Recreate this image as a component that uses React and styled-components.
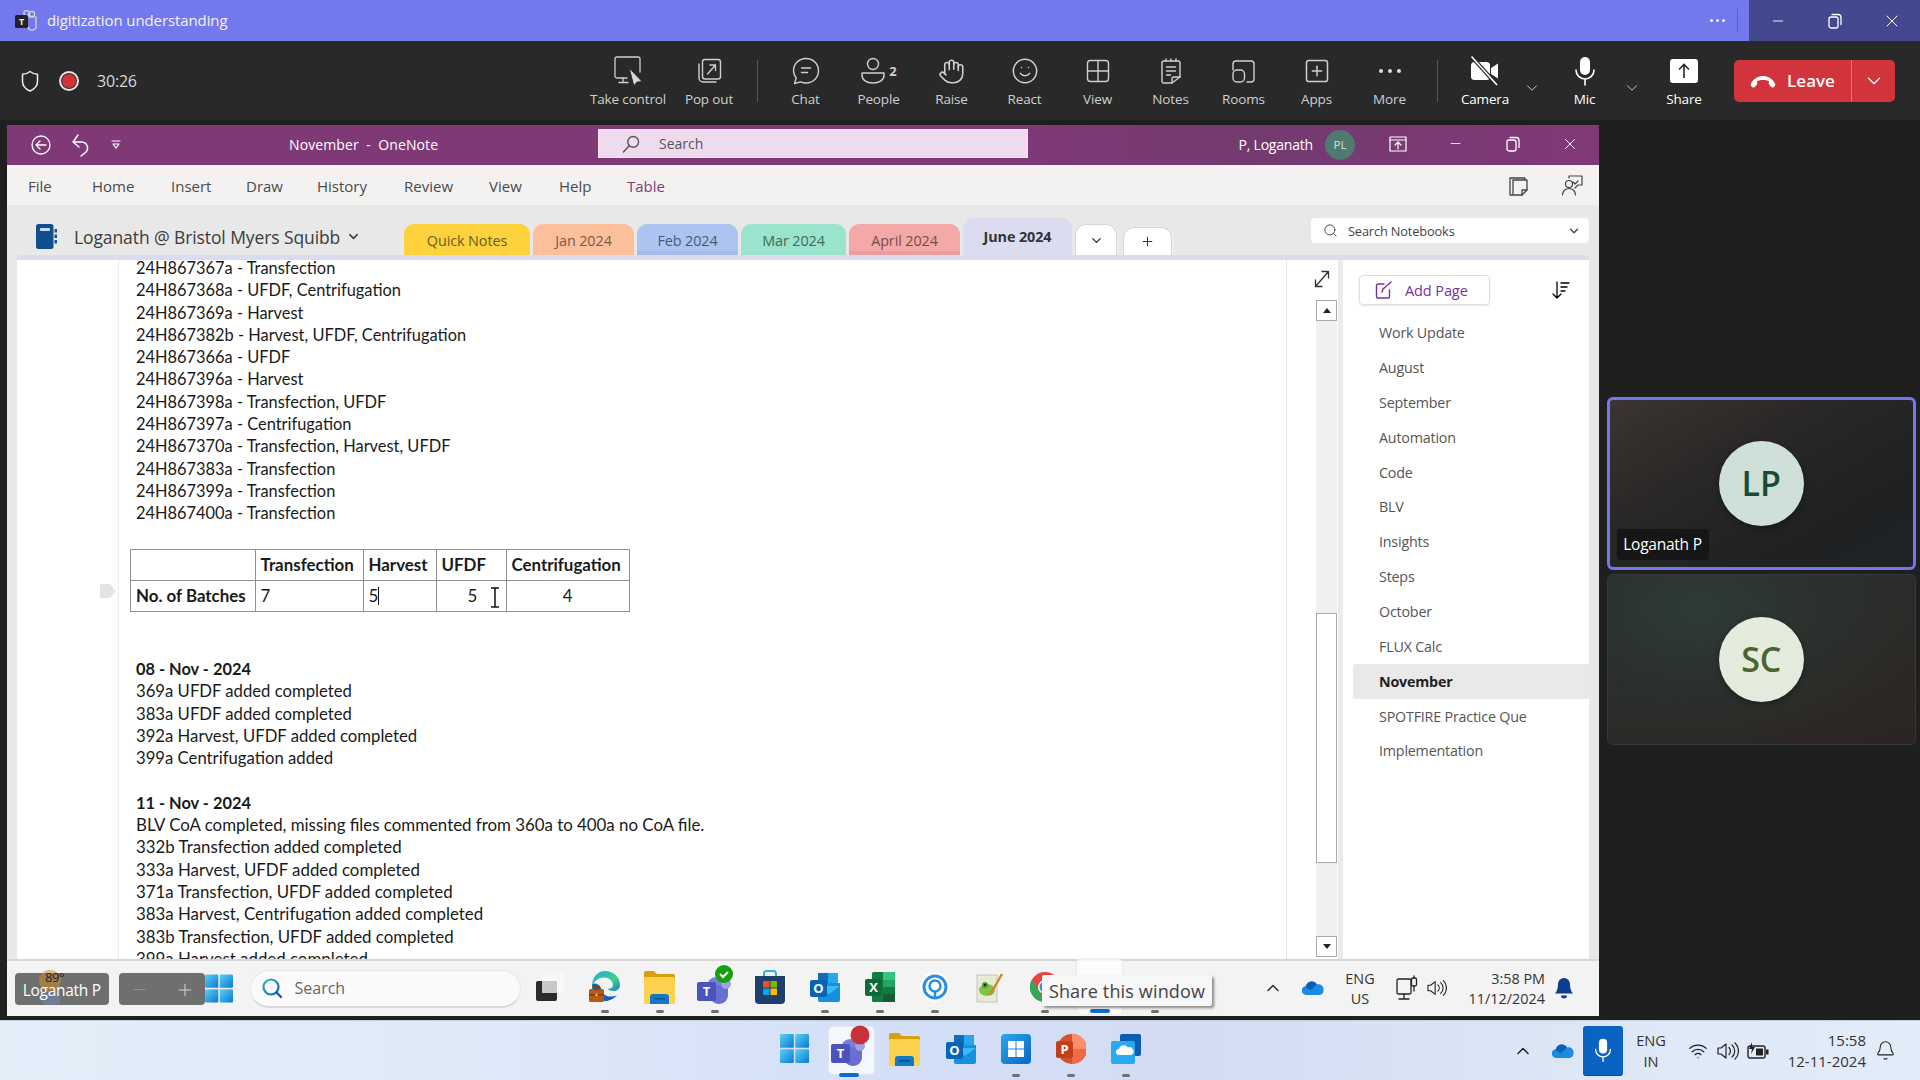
import React from "react";
import styled, { createGlobalStyle } from "styled-components";
import { Hand, Smile, SquarePlus, Search as SearchGlyph, ChevronDown, ChevronUp, X, Minus, Plus, Wifi, Bell } from "lucide-react";

const Global = createGlobalStyle`
  html, body { margin: 0; padding: 0; background: #1f1f1f; }
  * { box-sizing: border-box; }
  body { font-family: "Open Sans", "Noto Sans", sans-serif; }
`;

const Screen = styled.div`
  width: 1920px; height: 1080px; display: flex; flex-direction: column; overflow: hidden; background: #1f1f1f;
`;

/* Teams title */
const TeamsTitle = styled.div`
  height: 41px; flex: none; display: flex; align-items: center; background: #7378ec; color: #fff; padding-left: 15px;
`;
const TeamsName = styled.span`
  margin: -1px 0 0 10px; font-size: 15px; color: #f4f4ff; letter-spacing: -.1px;
`;
const TitleDots = styled.span`
  margin-left: auto; display: flex; gap: 3px; padding-right: 12px; height: 24px; align-items: center; border-right: 1px solid #5b5fc0; margin-right: 11px;
  i { width: 3px; height: 3px; border-radius: 50%; background: #fff; }
`;
const WinButtons = styled.div`
  width: 171px; height: 100%; display: flex; background: #43488f; color: #fff;
`;
const WinButton = styled.div`
  flex: 1; display: flex; align-items: center; justify-content: center;
`;

/* Teams toolbar */
const Toolbar = styled.div`
  height: 79px; flex: none; display: flex; align-items: center; background: #292929; padding: 0 25px 0 20px; color: #eee;
`;
const Timer = styled.span`
  font-size: 16px; color: #d8d8d8; margin-left: 18px; letter-spacing: -.2px;
`;
const RecDot = styled.span`
  margin-left: 19px; width: 20px; height: 20px; border-radius: 50%; border: 2.5px solid #e6e6e6; background: #d13438; box-shadow: inset 0 0 0 1px #292929;
`;
const Tools = styled.div`
  margin-left: auto; display: flex; align-items: center; height: 100%;
`;
const Tool = styled.div`
  width: ${p => p.$w || 73}px; flex: none; display: flex; flex-direction: column; align-items: center; color: ${p => p.$on ? "#fff" : "#cfcfcf"};
`;
const ToolIcon = styled.div`
  height: 36px; display: flex; align-items: center; justify-content: center; gap: 3px; font-size: 13px; font-weight: 700;
`;
const ToolLabel = styled.span`
  font-size: 13.5px; line-height: 18px; margin-top: 1px; white-space: nowrap; letter-spacing: -.15px;
`;
const Divider = styled.span`
  width: 1px; height: 42px; background: #575757; margin: 0 11.25px; flex: none;
`;
const ToolChev = styled.div`
  width: ${p => p.$w}px; margin-right: ${p => p.$mr || 0}px; flex: none; display: flex; justify-content: center; color: #d8d8d8; padding-top: 15px;
`;
const Leave = styled.div`
  width: 161px; height: 42px; margin-left: 14.5px; display: flex; border-radius: 5px; background: #d1343b; color: #fff; flex: none;
`;
const LeaveMain = styled.div`
  flex: 1; display: flex; align-items: center; justify-content: center; gap: 11px; font-size: 17px; font-weight: 600; border-right: 1px solid #e07a7e;
`;
const LeaveChev = styled.div`
  width: 43px; display: flex; align-items: center; justify-content: center;
`;

/* body */
const Body = styled.div`
  flex: 1; min-height: 0; display: flex; padding: 5px 0 4px 7px; background: #1f1f1f;
`;
const Shared = styled.div`
  width: 1592px; flex: none; display: flex; flex-direction: column; background: #e8e8e8;
`;
const OneTitle = styled.div`
  height: 41px; flex: none; display: flex; align-items: center; color: #fff; padding-bottom: 1px; border-bottom: 1px solid #f3f2f1;
  background: linear-gradient(90deg, #803977 0%, #803977 62%, #733a70 78%, #803977 100%);
`;
const QuickIcons = styled.div`
  width: 198px; flex: none; display: flex; align-items: center; gap: 20px; padding-left: 24px;
`;
const DocName = styled.div`
  width: 393px; flex: none; font-size: 14px; letter-spacing: .1px; white-space: pre; padding-left: 84px;
`;
const OneSearch = styled.div`
  width: 430px; height: 29px; margin-bottom: 2px; flex: none; display: flex; align-items: center; gap: 19px; padding-left: 24px; background: #f0dbee; color: #555; font-size: 14px; box-shadow: 0 0 0 1px #f5e9f3 inset;
`;
const OneUser = styled.div`
  margin-left: auto; font-size: 14px; letter-spacing: -.2px; white-space: nowrap;
`;
const OneAvatar = styled.div`
  margin-left: 12px; width: 30px; height: 30px; flex: none; border-radius: 50%; background: #4f7a6f; color: #cfe0d8; display: flex; align-items: center; justify-content: center; font-size: 11.5px;
`;
const OneControls = styled.div`
  display: flex; align-items: center; margin-left: 14px; padding-bottom: 2px; flex: none;
  > div { width: 57.5px; display: flex; justify-content: center; }
`;
const Ribbon = styled.div`
  height: 39px; flex: none; display: flex; align-items: center; background: #f3f2f1; font-size: 15px; padding-left: 21px; box-shadow: 0 2px 4px rgba(0,0,0,.13); position: relative;
`;
const RibbonItem = styled.span`
  width: ${p => p.$w}px; flex: none; color: ${p => p.$on ? "#7a3d78" : "#4a4a4a"};
`;
const RibbonEnd = styled.div`
  margin-left: auto; display: flex; gap: 32px; padding-right: 16px; color: #444; align-items: center;
`;
const TabRow = styled.div`
  height: 50px; flex: none; display: flex; align-items: flex-end; background: #e8e8e8; position: relative;
`;
const NotebookBox = styled.div`
  width: 397px; flex: none; align-self: flex-start; height: 37px; margin-top: 13px; display: flex; align-items: center; padding-left: 29px; font-size: 17.5px; color: #3c3c3c; letter-spacing: -.1px; white-space: nowrap;
  > span { margin: 0 6px 0 17px; }
`;
const Tabs = styled.div`
  display: flex; align-items: flex-end; gap: 3px;
`;
const Tab = styled.div`
  width: ${p => p.$w}px; height: ${p => p.$h || 31}px; flex: none; border-radius: 10px 10px 0 0; background: ${p => p.$bg}; color: ${p => p.$fg || "#555"}; font-size: 14.4px; font-weight: ${p => p.$on ? 700 : 400}; display: flex; align-items: center; justify-content: center; padding-top: ${p => p.$on ? 0 : 2}px; letter-spacing: -.1px; box-shadow: inset 0 -4px 0 ${p => p.$edge || "transparent"};
`;
const TabTool = styled.div`
  width: ${p => p.$w}px; height: ${p => p.$h}px; margin-left: ${p => p.$ml || 0}px; flex: none; background: #fff; border: 1px solid #d8d8d8; border-bottom: 0; border-radius: 11px 11px 0 0; color: #333; display: flex; align-items: center; justify-content: center; box-shadow: 3px 0 0 -1px #eee;
`;
const NotebookSearch = styled.div`
  margin-left: auto; margin-right: 10px; margin-bottom: 12px; width: 278px; height: 25px; background: #fff; border-radius: 4px; display: flex; align-items: center; font-size: 12.8px; color: #444; padding: 0 8px 0 12px; gap: 10px;
  span { flex: 1; letter-spacing: -.15px; }
`;
const Lavender = styled.div`
  height: 5px; flex: none; margin: 0 10px; background: #dcdcf0; border-radius: 4px 4px 0 0;
`;
const Main = styled.div`
  flex: 1; min-height: 0; display: flex; margin: 0 10px; background: #fff;
`;
const Note = styled.div`
  width: 1270px; flex: none; height: 100%; overflow: hidden; position: relative; border-right: 1px solid #e4e4e4; padding-left: 119px;
  font-family: Lato, "Open Sans", sans-serif; font-size: 16.4px; line-height: 22.3px; color: #1a1a1a;
  &::before { content: ""; position: absolute; left: 101px; top: 0; bottom: 0; width: 1px; background: #ececec; }
`;
const NoteInner = styled.div`
  margin-top: -3px;
`;
const Line = styled.div`
  white-space: pre; font-weight: ${p => p.$b ? 700 : 400}; ${p => p.$b ? "font-size: 16.4px;" : ""}
`;
const Block = styled.div`
  margin-top: ${p => p.$mt || 0}px; font-size: ${p => p.$fs || 16.4}px;
`;
const Table = styled.table`
  margin: 24.4px 0 46px -6px; width: 499px; height: 62px; table-layout: fixed; border-collapse: collapse; position: relative; font-size: 16.9px;
  td { border: 1px solid #8f8f8f; padding: 0 5px; height: 31px; line-height: 20px; }
`;
const Cell = styled.td`
  font-weight: ${p => p.$b ? 700 : 400}; text-align: ${p => p.$a || "left"}; ${p => p.$pl ? `padding-left:${p.$pl}px !important;` : ""}
`;
const Caret = styled.span`
  display: inline-block; width: 1px; height: 18px; background: #111; vertical-align: -3px;
`;
const Handle = styled.svg`
  position: absolute; left: 83px; top: 324px;
`;
const IBeam = styled.svg`
  position: absolute; left: 472px; top: 327px;
`;
const ScrollCol = styled.div`
  width: 56px; flex: none; display: flex; flex-direction: column; align-items: flex-end; border-right: 5px solid #ebebeb; padding: 9px 1px 2px 0;
`;
const ExpandBtn = styled.div`
  height: 31px; flex: none; color: #333; align-self: flex-start; margin-left: 27px; padding-top: 1px;
`;
const Track = styled.div`
  width: 21px; flex: 1; display: flex; flex-direction: column; background: #f0f0f0;
`;
const ScrollBtn = styled.div`
  height: 21px; flex: none; background: #fff; border: 1px solid #aaa; display: flex; align-items: center; justify-content: center;
  i { width: 0; height: 0; border-left: 4px solid transparent; border-right: 4px solid transparent; ${p => p.$down ? "border-top: 5px solid #222;" : "border-bottom: 5px solid #222;"} }
`;
const TrackGap = styled.div`
  flex: ${p => p.$f};
`;
const Thumb = styled.div`
  height: 250px; flex: none; background: #fff; border: 1px solid #aaa;
`;
const PagePane = styled.div`
  flex: 1; min-width: 0; padding-top: 15px;
`;
const PageHead = styled.div`
  display: flex; align-items: center; justify-content: space-between; padding: 0 19px 0 16px; height: 30px;
`;
const AddPage = styled.div`
  width: 131px; height: 30px; border: 1px solid #dedede; border-radius: 4px; display: flex; align-items: center; gap: 12px; padding-left: 15px; color: #7a2fa0; font-size: 14.5px; box-shadow: 0 1px 2px rgba(0,0,0,.1); letter-spacing: -.1px;
`;
const PageList = styled.div`
  margin-top: 10.3px; padding-left: 10px;
`;
const PageRow = styled.div`
  height: 34.85px; display: flex; align-items: center; padding-left: 26px; font-size: 14.3px; letter-spacing: -.2px; color: ${p => p.$on ? "#222" : "#555"}; font-weight: ${p => p.$on ? 700 : 400}; background: ${p => p.$on ? "#e9e9e9" : "transparent"}; border-radius: 3px 0 0 3px;
`;

/* shared taskbar */
const InnerBar = styled.div`
  height: 57px; flex: none; display: flex; align-items: center; background: #f3f3f3; border-top: 2px solid #d6d6d6; padding-left: 8px; position: relative;
`;
const Chip = styled.div`
  height: 32px; width: ${p => p.$w}px; margin-left: ${p => p.$ml || 0}px; flex: none; display: flex; align-items: center; justify-content: center; background: #6f6f6f; border-radius: 4px; color: #fff; font-size: 15.5px; letter-spacing: -.3px; position: relative; padding-top: 2px; gap: 26px; white-space: nowrap;
`;
const ChipText = styled.span`
  position: relative;
`;
const ChipArt = styled.svg`
  position: absolute; left: 20px; top: -4px;
`;
const Weather = styled.span`
  position: absolute; left: 30px; top: -5px; color: #222; font-size: 13px; letter-spacing: -.4px;
`;
const SearchPill = styled.div`
  width: 271px; height: 38px; margin: 0 1.5px 0 16.5px; flex: none; border-radius: 19px; background: #fafafa; border: 1px solid #e6e6e6; border-bottom: 2px solid #d8d8d8; display: flex; align-items: center; gap: 12px; padding-left: 10px; color: #666; font-size: 16px;
`;
const Slot = styled.div`
  width: ${p => p.$w || 55}px; height: 100%; flex: none; display: flex; align-items: center; justify-content: center; position: relative; padding-bottom: ${p => p.$pb ?? 3}px;
  ${p => p.$dot ? `&::after { content:""; position:absolute; left:50%; bottom:${p.$db ?? 3}px; width:8px; height:3px; margin-left:-4px; border-radius:2px; background:#707070; }` : ""}
  ${p => p.$active ? `&::after { content:""; position:absolute; left:50%; bottom:${p.$db ?? 3}px; width:20px; height:4px; margin-left:-10px; border-radius:2px; background:#0a6fd0; }` : ""}
`;
const ActiveSlot = styled(Slot)`
  &::before { content:""; position:absolute; left:${p => p.$hl ?? 4}px; right:${p => p.$hr ?? 4}px; top:${p => p.$ht ?? 1}px; bottom:${p => p.$hb ?? 1}px; border-radius:5px; background:#ffffff; border:1px solid #e8e8e8; opacity:.75; }
  svg { position: relative; }
`;
const Tip = styled.div`
  position: absolute; left: 1035px; top: 14px; width: 170px; height: 31px; background: #f7f7f7; color: #444; font-size: 18px; display: flex; align-items: center; justify-content: center; box-shadow: 2px 2px 3px rgba(0,0,0,.45); border-radius: 2px; letter-spacing: .15px; white-space: nowrap;
`;
const Tray = styled.div`
  margin-left: auto; display: flex; height: 100%; align-items: center; padding-right: 16px; color: #222;
`;
const TwoLines = styled.div`
  width: ${p => p.$w}px; flex: none; text-align: ${p => p.$a || "center"}; font-size: ${p => p.$fs || 14.4}px; line-height: ${p => p.$lh || 20}px; color: #333; white-space: nowrap;
`;
const OuterBar = styled.div`
  height: 60px; flex: none; display: flex; align-items: center; padding-left: 766.5px;
  background: linear-gradient(90deg, #e4eef9 0%, #dfe9f8 25%, #d4e0f8 45%, #d3dcf3 62%, #dbe5f5 78%, #e3edf9 100%);
  border-top: 1px solid #c5cdda;
`;
const MicTile = styled.div`
  width: 39.5px; height: 50px; flex: none; background: #0a63c0; border-radius: 3px; display: flex; align-items: center; justify-content: center; border-bottom: 1px solid #084c94;
`;

/* stage */
const Stage = styled.div`
  flex: 1; display: flex; flex-direction: column; justify-content: center; gap: 4px; padding: 0 4px 0 7.5px;
`;
const TileBox = styled.div`
  height: ${p => p.$h}px; flex: none; border-radius: 6px; display: flex; align-items: center; justify-content: center; position: relative;
  border: ${p => p.$active ? "3.5px solid #7378ec" : "1px solid #333a38"};
  background: ${p => p.$active
    ? "linear-gradient(150deg, #3b3432 0%, #2a2827 35%, #1f2123 70%, #1f2325 100%)"
    : "radial-gradient(ellipse at 30% 20%, #2d3b37 0%, #2b2f2c 45%, transparent 75%), linear-gradient(160deg, #2b3230 0%, #2c2a28 55%, #2b2422 100%)"};
`;
const Avatar = styled.div`
  width: 85px; height: 85px; border-radius: 50%; background: ${p => p.$bg}; color: ${p => p.$fg}; display: flex; align-items: center; justify-content: center; font-size: 34px; font-weight: 600; box-shadow: 0 2px 6px rgba(0,0,0,.35);
`;
const NameTag = styled.div`
  position: absolute; left: 7px; bottom: 7px; width: 92px; height: 31px; background: #161616; border-radius: 4px; color: #fff; font-size: 15.5px; display: flex; align-items: center; justify-content: center; letter-spacing: -.25px; white-space: nowrap;
`;

/* ---------- drawings ---------- */
const S = ({ w = 24, h, vb, children, stroke = "currentColor", sw = 1.5, fill = "none" }) => (
  <svg width={w} height={h || w} viewBox={vb || `0 0 ${w} ${h || w}`} fill={fill} stroke={stroke} strokeWidth={sw} strokeLinecap="round" strokeLinejoin="round">{children}</svg>
);
const TeamsSmall = () => (
  <svg width="22" height="21" viewBox="0 0 22 21"><circle cx="17" cy="4" r="2.6" fill="none" stroke="#ddd" strokeWidth="1.2"/><circle cx="11.5" cy="3" r="2.6" fill="none" stroke="#ddd" strokeWidth="1.2"/><path d="M9 7h12v8a4 4 0 0 1-8 2" fill="none" stroke="#ddd" strokeWidth="1.2"/><rect x="0" y="5" width="13" height="13" rx="1.5" fill="#222"/><text x="6.5" y="15" fontSize="9" fontWeight="700" fill="#eee" textAnchor="middle" fontFamily="Open Sans">T</text></svg>
);
const Shield = () => <S w={20} h={24}><path d="M10 2.5c2.4 2 5 2.8 7.5 2.8v7.2c0 4.4-3 7.5-7.5 9.500-4.500-2-7.500-5.100-7.500-9.500V5.300C5 5.300 7.600 4.500 10 2.500z"/></S>;
const TakeControl = () => (
  <S w={30} h={30} sw={1.3}>
    <path d="M14 22H4a2 2 0 0 1-2-2V3a2 2 0 0 1 2-2h21a2 2 0 0 1 2 2v13"/>
    <path d="M10 22v4M6 26.500h9"/>
    <path d="M16.500 12.500L29 25.500l-5 .5-3 3.500z" fill="#d8d8d8" stroke="#292929" strokeWidth=".8"/>
  </S>
);
const PopOut = () => <S w={26} h={28} sw={1.4}><path d="M3 7v14a4 4 0 0 0 4 4h13"/><rect x="6.500" y="2.500" width="18" height="19.500" rx="2.500"/><path d="M11.500 17l8-9M14 8h5.500v5.500"/></S>;
const Chat = () => <S w={28} h={28} sw={1.4}><path d="M14 1.500c6.900 0 12.500 5.400 12.500 12.300S20.900 26 14 26c-2 0-3.800-.4-5.500-1.200L2.500 26.500l1.700-5.500C2.600 19 1.500 16.500 1.500 13.800 1.500 6.900 7.100 1.500 14 1.500z"/><path d="M9.500 11h9M9.500 15.500h6"/></S>;
const People = () => <S w={26} h={28} sw={1.4}><circle cx="13" cy="7" r="5.500"/><path d="M2 16h22v2c0 5-4.500 8-11 8S2 23 2 18z"/></S>;
const ViewIcon = () => <S w={26} h={26} sw={1.4}><rect x="2.500" y="2.500" width="21" height="21" rx="3"/><path d="M13 2.500v21M2.500 13h21"/></S>;
const NotesIcon = () => <S w={24} h={28} sw={1.4}><path d="M13 26H5a2 2 0 0 1-2-2V6a2 2 0 0 1 2-2h14a2 2 0 0 1 2 2v14z"/><path d="M7 2v2M12 2v2M17 2v2M7.500 10h9M7.500 14h9M7.500 18h4M13 26v-4a2 2 0 0 1 2-2h6"/></S>;
const Rooms = () => <S w={25} h={25} sw={1.4}><path d="M2 11V5a3 3 0 0 1 3-3h15a3 3 0 0 1 3 3v15a3 3 0 0 1-3 3h-4"/><rect x="2" y="11" width="11.500" height="12" rx="4"/></S>;
const CameraOff = () => (
  <svg width="30" height="32" viewBox="0 0 30 32"><rect x="1" y="7" width="19" height="18" rx="3.500" fill="#fff"/><path d="M21 13l7-4.500v15L21 19z" fill="#fff"/><path d="M1.500 1.500L27 30" stroke="#292929" strokeWidth="4"/><path d="M1.500 1.500L27 30" stroke="#fff" strokeWidth="1.600"/></svg>
);
const MicIcon = ({ c = "#fff", s = 1 }) => (
  <svg width={22 * s} height={30 * s} viewBox="0 0 22 30"><rect x="6" y="1" width="10" height="18" rx="5" fill={c}/><path d="M2 14a9 9 0 0 0 18 0M11 23v6" fill="none" stroke={c} strokeWidth="1.600" strokeLinecap="round"/></svg>
);
const ShareIcon = () => (
  <svg width="28" height="24" viewBox="0 0 28 24"><rect x="0" y="0" width="28" height="24" rx="3" fill="#fff"/><path d="M14 19V6M9 10.500L14 5.500l5 5" stroke="#292929" strokeWidth="1.600" fill="none"/></svg>
);
const Hangup = () => (
  <svg width="26" height="14" viewBox="0 0 26 14"><path d="M1 9.500C4 4 8.500 2 13 2s9 2 12 7.500c.5 1 .3 2-.4 2.700l-.8.8c-.7.700-1.800.700-2.500 0l-2-2.200c-.5-.6-.7-1.500-.5-2.300l.3-1.200C17.500 6.500 15.500 6 13 6s-4.500.5-6.100 1.300l.3 1.200c.2.800 0 1.700-.5 2.300l-2 2.200c-.7.700-1.800.700-2.500 0l-.8-.8C.7 11.500.5 10.500 1 9.500z" fill="#fff"/></svg>
);
const Restore = () => <S w={14} h={16} sw={1.300}><rect x="1" y="4" width="9" height="11" rx="2"/><path d="M4 1.500h6a3 3 0 0 1 3 3v7"/></S>;
const BackCircle = () => <S w={20} h={24} sw={1.300}><circle cx="10" cy="12" r="9"/><path d="M15 12H5.500M9 8l-4 4 4 4"/></S>;
const Undo = () => <S w={20} h={24} sw={1.400}><path d="M2 9h9a6 6 0 0 1 4 10l-5 4M2 9l5-7M2 9l6 5"/></S>;
const QuickDown = () => <S w={10} h={12} sw={1.200}><path d="M1 2h8M2 5h6L5 9z"/></S>;
const Glass = ({ w = 18 }) => <S w={w} h={w} sw={1.400}><circle cx={w * .62} cy={w * .38} r={w * .3}/><path d={`M${w * .4} ${w * .6}L${w * .08} ${w * .94}`}/></S>;
const RibbonPop = () => <S w={20} h={20} sw={1.300}><path d="M1 2h15v1M1 2v17h12l5-5V4H4v15"/><path d="M13 19v-5h5"/></S>;
const Feedback = () => <S w={22} h={22} sw={1.200}><circle cx="8" cy="9" r="3.500"/><path d="M1.500 20c0-4 3-6.500 6.500-6.500s6.500 2.500 6.500 6.500"/><path d="M8 3V1h13v9h-4l-3 3M12 7l2 2 3-3"/></S>;
const NotebookIcon = () => (
  <svg width="21" height="25" viewBox="0 0 21 25"><rect x="0" y="0" width="17.500" height="25" rx="2.500" fill="#0f4f8c"/><rect x="4" y="4" width="10" height="3" rx="1" fill="#c9dcee"/><rect x="18.500" y="5" width="2.500" height="3.500" fill="#14508c"/><rect x="18.500" y="10.500" width="2.500" height="3.500" fill="#14508c"/><rect x="18.500" y="16" width="2.500" height="3.500" fill="#14508c"/></svg>
);
const AddPageIcon = () => <S w={18} h={18} sw={1.400}><path d="M9 3H3a1.500 1.500 0 0 0-1.500 1.500v11A1.500 1.500 0 0 0 3 17h10a1.500 1.500 0 0 0 1.500-1.500V9"/><path d="M7 11l1-3 8-7"/></S>;
const SortIcon = () => <S w={18} h={20} sw={1.300}><path d="M5 2v16M1 14l4 4 4-4M9 3h8M9 7h6M9 11h4"/></S>;
const ExpandIcon = () => <S w={16} h={18} sw={1.300}><path d="M1.500 16.500L14.500 1.500M8 1.500h6.500V8M1.500 10v6.500H8"/></S>;

const WinLogo = ({ s = 28, h }) => (
  <svg width={s} height={h || s} viewBox="0 0 28 28"><defs><linearGradient id="wl" x1="0" y1="0" x2="1" y2="1"><stop offset="0" stopColor="#5bd2f5"/><stop offset="1" stopColor="#0a78d4"/></linearGradient></defs><rect x="0" y="0" width="13.300" height="13.300" rx="1" fill="url(#wl)"/><rect x="14.700" y="0" width="13.300" height="13.300" rx="1" fill="url(#wl)"/><rect x="0" y="14.700" width="13.300" height="13.300" rx="1" fill="url(#wl)"/><rect x="14.700" y="14.700" width="13.300" height="13.300" rx="1" fill="url(#wl)"/></svg>
);
const SearchColor = () => (
  <svg width="22" height="22" viewBox="0 0 22 22"><defs><linearGradient id="sc" x1="0" y1="0" x2="1" y2="1"><stop offset="0" stopColor="#35b8a8"/><stop offset="1" stopColor="#0a5fc0"/></linearGradient></defs><circle cx="10" cy="10" r="7.500" fill="none" stroke="url(#sc)" strokeWidth="2.200"/><path d="M15.500 15.500L20 20" stroke="#0a5fc0" strokeWidth="2.400" strokeLinecap="round"/></svg>
);
const TaskView = () => (
  <svg width="28" height="30" viewBox="0 0 28 30"><rect x="6" y="1" width="22" height="20" rx="2" fill="#f8f8f8"/><rect x="0" y="9" width="21" height="20" rx="2" fill="#2a2a2a"/><rect x="6" y="9" width="15" height="12" fill="#c8c8c8"/></svg>
);
const Edge = () => (
  <svg width="32" height="34" viewBox="0 0 32 34"><defs><linearGradient id="eg" x1="0" y1="0" x2="1" y2="1"><stop offset="0" stopColor="#1fa6e0"/><stop offset=".6" stopColor="#3fd28a"/><stop offset="1" stopColor="#1a78c8"/></linearGradient></defs><path d="M16 1c9 0 15 6.500 15 14 0 4-3.500 6-7 6-3 0-5-1-5-2.500 3 .5 5-1 5-3.500 0-4-4-7.500-9-7.500-6 0-10 4-12 9C3 8 8 1 16 1z" fill="url(#eg)"/><path d="M3 16c0 9 6 15 13 15 5 0 9-2.500 12-6-4 2-9 2-12 0-3-2-4-5-4-7-2-5-9-6-9-2z" fill="#1260b8"/><rect x="0" y="19" width="15" height="13" rx="1.500" fill="#b85a10"/><rect x="5" y="16.500" width="5" height="3" fill="none" stroke="#8a4208" strokeWidth="1.200"/><rect x="0" y="24" width="15" height="1.500" fill="#7a3a08"/><rect x="6.500" y="23.500" width="2" height="2.500" fill="#f3c14a"/></svg>
);
const Folder = () => (
  <svg width="31" height="34" viewBox="0 0 31 34"><path d="M0 3a2 2 0 0 1 2-2h8l3 3h16a2 2 0 0 1 2 2v4H0z" fill="#d9a00c"/><rect x="0" y="7" width="31" height="27" rx="1.500" fill="#fdd24f"/><path d="M6 34v-7a3 3 0 0 1 3-3h13a3 3 0 0 1 3 3v7z" fill="#1278c8"/><rect x="10" y="28" width="11" height="1.500" fill="#0b4f8f"/></svg>
);
const TeamsColor = ({ badge }) => (
  <svg width="38" height="38" viewBox="0 0 38 38" overflow="visible"><circle cx="20" cy="18" r="9" fill="#7a80d8"/><path d="M12 17h20v10c0 5-4 9-9 9s-9-4-9-8z" fill="#6a6fcf"/><circle cx="30" cy="16" r="5" fill="#9ea2e6"/><rect x="1" y="14" width="19" height="19" rx="2" fill="#4b53bc"/><text x="10.500" y="28" fontSize="13" fontWeight="700" textAnchor="middle" fill="#fff" fontFamily="Open Sans">T</text>{badge}</svg>
);
const Store = () => (
  <svg width="30" height="34" viewBox="0 0 30 34"><path d="M9 6V3.500A2.500 2.500 0 0 1 11.500 1h7A2.500 2.500 0 0 1 21 3.500V6" fill="none" stroke="#35b0e0" strokeWidth="2"/><path d="M0 6h30v24a4 4 0 0 1-4 4H4a4 4 0 0 1-4-4z" fill="#1e3f6c"/><rect x="8" y="11" width="6.500" height="6.500" fill="#f25022"/><rect x="15.500" y="11" width="6.500" height="6.500" fill="#7fba00"/><rect x="8" y="18.500" width="6.500" height="6.500" fill="#00a4ef"/><rect x="15.500" y="18.500" width="6.500" height="6.500" fill="#ffb900"/></svg>
);
const Outlook = () => (
  <svg width="30" height="30" viewBox="0 0 30 30"><rect x="8" y="1" width="20" height="10" fill="#0a5aa8"/><rect x="8" y="1" width="10" height="10" fill="#0f6cbd"/><rect x="18" y="1" width="10" height="10" fill="#28a8ea"/><path d="M8 11h22v17a2 2 0 0 1-2 2H10a2 2 0 0 1-2-2z" fill="#1490df"/><path d="M8 14l11 8 11-8" fill="#50d9ff" opacity=".6"/><rect x="0" y="8" width="17" height="17" rx="2" fill="#0a64b4"/><text x="8.500" y="21" fontSize="13" fontWeight="700" textAnchor="middle" fill="#fff" fontFamily="Open Sans">O</text></svg>
);
const Excel = () => (
  <svg width="30" height="30" viewBox="0 0 30 30"><rect x="7" y="0" width="23" height="30" rx="1.500" fill="#107c41"/><rect x="18" y="0" width="12" height="8" fill="#33c481"/><rect x="18" y="8" width="12" height="7" fill="#21a366"/><rect x="18" y="15" width="12" height="7" fill="#107c41"/><rect x="18" y="22" width="12" height="8" fill="#185c37"/><rect x="0" y="7" width="17" height="17" rx="2" fill="#0e6b38"/><text x="8.500" y="20" fontSize="13" fontWeight="700" textAnchor="middle" fill="#fff" fontFamily="Open Sans">X</text></svg>
);
const Target = () => (
  <svg width="30" height="30" viewBox="0 0 30 30"><circle cx="15" cy="15" r="15" fill="#fff"/><circle cx="15" cy="15" r="11" fill="none" stroke="#2a8fe0" strokeWidth="3"/><circle cx="15" cy="14" r="5.500" fill="none" stroke="#2a8fe0" strokeWidth="2.500"/><path d="M15 19v6" stroke="#2a8fe0" strokeWidth="2.500"/></svg>
);
const Npp = () => (
  <svg width="28" height="32" viewBox="0 0 28 32"><rect x="1" y="4" width="20" height="27" fill="#e8ead8" stroke="#bbb" strokeWidth=".8"/><ellipse cx="11" cy="19" rx="8" ry="6" fill="#7fc24a"/><circle cx="9" cy="14" r="3" fill="#5a9a30"/><circle cx="9" cy="14" r="1.200" fill="#222"/><path d="M14 24L26 3" stroke="#d08a2a" strokeWidth="2.500"/></svg>
);
const Chrome = () => (
  <svg width="30" height="30" viewBox="0 0 30 30"><circle cx="15" cy="15" r="15" fill="#e8453c"/><path d="M15 30A15 15 0 0 1 2 7.500L9 19z" fill="#34a853"/><path d="M15 30a15 15 0 0 0 13-22.500H15l6 11z" fill="#fbbc05"/><circle cx="15" cy="15" r="7" fill="#fff"/><circle cx="15" cy="15" r="5.500" fill="#4285f4"/></svg>
);
const Cloud = () => (
  <svg width="22" height="14" viewBox="0 0 22 14"><path d="M4.500 14A4.500 4.500 0 0 1 4 5a6 6 0 0 1 11-1.500A5 5 0 0 1 21.500 9 5 5 0 0 1 17.500 14z" fill="#1b8ae0"/><path d="M4 5a6 6 0 0 1 11-1.500L9 9 4.500 7z" fill="#0a5fb4"/></svg>
);
const NetIcon = () => <S w={22} h={26} sw={1.300}><rect x="1" y="4" width="14" height="15" rx="1.500"/><path d="M8 19v4M3 24h10"/><rect x="15.500" y="3" width="5" height="8" rx="1.500" fill="#f3f3f3"/><path d="M18 1v2M18 11v5"/></S>;
const Speaker = () => <S w={22} h={20} sw={1.200}><path d="M1 7v6h3l5 4V3L4 7zM12 6.500a5 5 0 0 1 0 7M15 4a8 8 0 0 1 0 12M18 2a11 11 0 0 1 0 16"/></S>;
const BellFill = () => <svg width="18" height="22" viewBox="0 0 18 22"><path d="M9 1a6 6 0 0 1 6 6c0 6 2 8 3 9.500H0C1 15 3 13 3 7a6 6 0 0 1 6-6z" fill="#0b3d91"/><path d="M6 18.500h6a3 3 0 0 1-6 0z" fill="#0b3d91"/></svg>;
const Battery = () => (
  <svg width="22" height="20" viewBox="0 0 22 20"><rect x="1" y="5" width="17" height="12" rx="2" fill="none" stroke="#222" strokeWidth="1.400"/><rect x="9" y="7.500" width="7" height="7" fill="#222"/><rect x="19" y="8.500" width="2.500" height="5" fill="#222"/><path d="M5 1L2 8h3l-1 5 4-7H5z" fill="#222"/></svg>
);
const Powerpoint = () => (
  <svg width="30" height="32" viewBox="0 0 30 32"><circle cx="16" cy="16" r="15" fill="#d35230"/><path d="M16 1a15 15 0 0 1 15 15H16z" fill="#ff8f6b"/><path d="M16 16h15a15 15 0 0 1-15 15z" fill="#ed6c47"/><rect x="0" y="8" width="17" height="17" rx="2" fill="#c43e1c"/><text x="8.500" y="21" fontSize="13" fontWeight="700" textAnchor="middle" fill="#fff" fontFamily="Open Sans">P</text></svg>
);
const BlueTile = () => (
  <svg width="30" height="30" viewBox="0 0 30 30"><defs><linearGradient id="bt" x1="0" y1="0" x2="1" y2="1"><stop offset="0" stopColor="#2aa8f0"/><stop offset="1" stopColor="#0a66c2"/></linearGradient></defs><rect width="30" height="30" rx="4" fill="url(#bt)"/><rect x="7" y="7" width="7.500" height="7.500" fill="#fff"/><rect x="15.500" y="7" width="7.500" height="7.500" fill="#fff"/><rect x="7" y="15.500" width="7.500" height="7.500" fill="#fff"/><rect x="15.500" y="15.500" width="7.500" height="7.500" fill="#fff"/></svg>
);
const AzureCloud = () => (
  <svg width="30" height="30" viewBox="0 0 30 30"><rect x="9" y="0" width="21" height="22" rx="2" fill="#0a5fb4"/><rect x="0" y="7" width="24" height="23" rx="2" fill="#2aa8f0"/><path d="M8 21a3 3 0 0 1 0-6 5 5 0 0 1 9-1.500A4 4 0 0 1 20 21z" fill="#fff"/></svg>
);

const pages = ["Work Update", "August", "September", "Automation", "Code", "BLV", "Insights", "Steps", "October", "FLUX Calc", "November", "SPOTFIRE Practice Que", "Implementation"];
const batches = ["24H867367a - Transfection", "24H867368a - UFDF, Centrifugation", "24H867369a - Harvest", "24H867382b - Harvest, UFDF, Centrifugation", "24H867366a - UFDF", "24H867396a - Harvest", "24H867398a - Transfection, UFDF", "24H867397a - Centrifugation", "24H867370a - Transfection, Harvest, UFDF", "24H867383a - Transfection", "24H867399a - Transfection", "24H867400a - Transfection"];
const nov8 = ["369a UFDF added completed", "383a UFDF added completed", "392a Harvest, UFDF added completed", "399a Centrifugation added"];
const nov11 = ["BLV CoA completed, missing files commented from 360a to 400a no CoA file.", "332b Transfection added completed", "333a Harvest, UFDF added completed", "371a Transfection, UFDF added completed", "383a Harvest, Centrifugation added completed", "383b Transfection, UFDF added completed", "399a Harvest added completed"];
const tabs = [
  { t: "Quick Notes", w: 126, bg: "#fdd23c", fg: "#6a5a20" },
  { t: "Jan 2024", w: 101, bg: "#fcbf9c", fg: "#7a5a48" },
  { t: "Feb 2024", w: 101, bg: "#aec4f0", fg: "#4a5a78", edge: "#a4bbe8" },
  { t: "Mar 2024", w: 105, bg: "#9ae3cc", fg: "#3f6a5c" },
  { t: "April 2024", w: 111, bg: "#f4a8a8", fg: "#7a4a4a", edge: "#eb9e9e" },
];

export default function App() {
  return (
    <Screen>
      <Global />
      <TeamsTitle>
        <TeamsSmall />
        <TeamsName>digitization understanding</TeamsName>
        <TitleDots><i /><i /><i /></TitleDots>
        <WinButtons>
          <WinButton><Minus size={16} strokeWidth={1.4} /></WinButton>
          <WinButton><Restore /></WinButton>
          <WinButton><X size={20} strokeWidth={1.2} /></WinButton>
        </WinButtons>
      </TeamsTitle>
      <Toolbar>
        <Shield />
        <RecDot />
        <Timer>30:26</Timer>
        <Tools>
          <Tool $w={89}><ToolIcon><TakeControl /></ToolIcon><ToolLabel>Take control</ToolLabel></Tool>
          <Tool><ToolIcon><PopOut /></ToolIcon><ToolLabel>Pop out</ToolLabel></Tool>
          <Divider />
          <Tool><ToolIcon><Chat /></ToolIcon><ToolLabel>Chat</ToolLabel></Tool>
          <Tool><ToolIcon><People />2</ToolIcon><ToolLabel>People</ToolLabel></Tool>
          <Tool><ToolIcon><Hand size={27} strokeWidth={1.4} /></ToolIcon><ToolLabel>Raise</ToolLabel></Tool>
          <Tool><ToolIcon><Smile size={28} strokeWidth={1.3} /></ToolIcon><ToolLabel>React</ToolLabel></Tool>
          <Tool><ToolIcon><ViewIcon /></ToolIcon><ToolLabel>View</ToolLabel></Tool>
          <Tool><ToolIcon><NotesIcon /></ToolIcon><ToolLabel>Notes</ToolLabel></Tool>
          <Tool><ToolIcon><Rooms /></ToolIcon><ToolLabel>Rooms</ToolLabel></Tool>
          <Tool><ToolIcon><SquarePlus size={28} strokeWidth={1.3} /></ToolIcon><ToolLabel>Apps</ToolLabel></Tool>
          <Tool><ToolIcon><svg width="24" height="6" viewBox="0 0 24 6"><circle cx="3" cy="3" r="2" fill="#ddd"/><circle cx="12" cy="3" r="2" fill="#ddd"/><circle cx="21" cy="3" r="2" fill="#ddd"/></svg></ToolIcon><ToolLabel>More</ToolLabel></Tool>
          <Divider />
          <Tool $w={71} $on><ToolIcon><CameraOff /></ToolIcon><ToolLabel>Camera</ToolLabel></Tool>
          <ToolChev $w={23}><ChevronDown size={18} strokeWidth={1.2} /></ToolChev>
          <Tool $w={82} $on><ToolIcon><MicIcon /></ToolIcon><ToolLabel>Mic</ToolLabel></Tool>
          <ToolChev $w={12} $mr={11}><ChevronDown size={18} strokeWidth={1.2} style={{ flex: "none" }} /></ToolChev>
          <Tool $w={71} $on><ToolIcon><ShareIcon /></ToolIcon><ToolLabel>Share</ToolLabel></Tool>
          <Leave>
            <LeaveMain><Hangup />Leave</LeaveMain>
            <LeaveChev><ChevronDown size={22} strokeWidth={1.3} /></LeaveChev>
          </Leave>
        </Tools>
      </Toolbar>
      <Body>
        <Shared>
          <OneTitle>
            <QuickIcons><BackCircle /><Undo /><QuickDown /></QuickIcons>
            <DocName>{"November  -  OneNote"}</DocName>
            <OneSearch><Glass />Search</OneSearch>
            <OneUser>P, Loganath</OneUser>
            <OneAvatar>PL</OneAvatar>
            <OneControls>
              <div><S w={18} h={16} sw={1.200}><rect x="1" y="1" width="16" height="14"/><path d="M1 4h16M9 13V6M6 9l3-3 3 3"/></S></div>
              <div><Minus size={15} strokeWidth={1.4} /></div>
              <div><Restore /></div>
              <div><X size={18} strokeWidth={1.3} /></div>
            </OneControls>
          </OneTitle>
          <Ribbon>
            <RibbonItem $w={64}>File</RibbonItem>
            <RibbonItem $w={79}>Home</RibbonItem>
            <RibbonItem $w={75}>Insert</RibbonItem>
            <RibbonItem $w={71}>Draw</RibbonItem>
            <RibbonItem $w={87}>History</RibbonItem>
            <RibbonItem $w={85}>Review</RibbonItem>
            <RibbonItem $w={70}>View</RibbonItem>
            <RibbonItem $w={68}>Help</RibbonItem>
            <RibbonItem $w={50} $on>Table</RibbonItem>
            <RibbonEnd><RibbonPop /><Feedback /></RibbonEnd>
          </Ribbon>
          <TabRow>
            <NotebookBox><NotebookIcon /><span>Loganath @ Bristol Myers Squibb</span><ChevronDown size={15} strokeWidth={2.4} /></NotebookBox>
            <Tabs>
              {tabs.map(t => <Tab key={t.t} $w={t.w} $bg={t.bg} $fg={t.fg} $edge={t.edge}>{t.t}</Tab>)}
              <Tab $w={109} $h={37} $bg="#dcdcf0" $fg="#333" $on>June 2024</Tab>
              <TabTool $w={42} $h={31}><ChevronDown size={15} strokeWidth={2.2} /></TabTool>
              <TabTool $w={49} $h={28} $ml={3}><Plus size={15} strokeWidth={1.6} /></TabTool>
            </Tabs>
            <NotebookSearch><SearchGlyph size={15} strokeWidth={1.5} /><span>Search Notebooks</span><ChevronDown size={14} strokeWidth={2.4} /></NotebookSearch>
          </TabRow>
          <Lavender />
          <Main>
            <Note>
              <NoteInner>
                <Block>{batches.map(l => <Line key={l}>{l}</Line>)}</Block>
                <Table>
                  <colgroup><col style={{ width: 124.5 }} /><col style={{ width: 108 }} /><col style={{ width: 73 }} /><col style={{ width: 70 }} /><col style={{ width: 123.5 }} /></colgroup>
                  <tbody>
                    <tr><Cell /><Cell $b>Transfection</Cell><Cell $b>Harvest</Cell><Cell $b>UFDF</Cell><Cell $b>Centrifugation</Cell></tr>
                    <tr><Cell $b>No. of Batches</Cell><Cell>7</Cell><Cell>5<Caret /></Cell><Cell $a="left" $pl={31}>5</Cell><Cell $a="center">4</Cell></tr>
                  </tbody>
                </Table>
                <Block $fs={16.7}>
                  <Line $b>08 - Nov - 2024</Line>
                  {nov8.map(l => <Line key={l}>{l}</Line>)}
                </Block>
                <Block $mt={22.3} $fs={16.85}>
                  <Line $b>11 - Nov - 2024</Line>
                  {nov11.map(l => <Line key={l}>{l}</Line>)}
                </Block>
              </NoteInner>
              <Handle width="16" height="14" viewBox="0 0 16 14"><path d="M0 0h10l6 7-6 7H0z" fill="#e4e4e4"/></Handle>
              <IBeam width="12" height="21" viewBox="0 0 12 21"><path d="M2 1h8M2 20h8M6 1v19" stroke="#111" strokeWidth="1.500" fill="none"/></IBeam>
            </Note>
            <ScrollCol>
              <ExpandBtn><ExpandIcon /></ExpandBtn>
              <Track>
                <ScrollBtn><i /></ScrollBtn>
                <TrackGap $f={291} />
                <Thumb />
                <TrackGap $f={73} />
                <ScrollBtn $down><i /></ScrollBtn>
              </Track>
            </ScrollCol>
            <PagePane>
              <PageHead>
                <AddPage><AddPageIcon />Add Page</AddPage>
                <SortIcon />
              </PageHead>
              <PageList>{pages.map(p => <PageRow key={p} $on={p === "November"}>{p}</PageRow>)}</PageList>
            </PagePane>
          </Main>
          <InnerBar>
            <Chip $w={93.5}>
              <ChipArt width="30" height="36" viewBox="0 0 30 36"><circle cx="15" cy="12" r="11" fill="#c98a2a" opacity=".55"/><rect x="7" y="24" width="18" height="12" rx="2" fill="#6f8fc0" opacity=".45"/></ChipArt>
              <Weather>89°</Weather>
              <ChipText>Loganath P</ChipText>
            </Chip>
            <Chip $w={86} $ml={10.5}><Minus size={19} strokeWidth={1} color="#999" /><Plus size={20} strokeWidth={1.1} color="#ddd" /></Chip>
            <WinLogo s={28} h={29} />
            <SearchPill><SearchColor />Search</SearchPill>
            <Slot><TaskView /></Slot>
            <Slot $dot><Edge /></Slot>
            <Slot $dot><Folder /></Slot>
            <Slot $dot><TeamsColor badge={<g><circle cx="28" cy="6" r="9" fill="#13a10e"/><path d="M24 6l3 3 5-5" stroke="#fff" strokeWidth="2" fill="none"/></g>} /></Slot>
            <Slot><Store /></Slot>
            <Slot $dot><Outlook /></Slot>
            <Slot $dot><Excel /></Slot>
            <Slot $dot><Target /></Slot>
            <Slot><Npp /></Slot>
            <Slot $dot><Chrome /></Slot>
            <ActiveSlot $active $ht={-3} $hb={1}></ActiveSlot>
            <Slot $dot></Slot>
            <Tip>Share this window</Tip>
            <Tray>
              <Slot $w={40} $pb={2}><ChevronUp size={20} strokeWidth={1.6} /></Slot>
              <Slot $w={40} $pb={2}><Cloud /></Slot>
              <TwoLines $w={54}>ENG<br />US</TwoLines>
              <Slot $w={40} $pb={2}><NetIcon /></Slot>
              <Slot $w={20} $pb={2}><Speaker /></Slot>
              <TwoLines $w={98} $a="right">3:58 PM<br />11/12/2024</TwoLines>
              <Slot $w={38} $pb={2}><BellFill /></Slot>
            </Tray>
          </InnerBar>
        </Shared>
        <Stage>
          <TileBox $h={173} $active>
            <Avatar $bg="#cfe0d8" $fg="#1c4a34">LP</Avatar>
            <NameTag>Loganath P</NameTag>
          </TileBox>
          <TileBox $h={171}>
            <Avatar $bg="#e3ebdc" $fg="#4a6430">SC</Avatar>
          </TileBox>
        </Stage>
      </Body>
      <OuterBar>
        <Slot $pb={4}><WinLogo s={29} /></Slot>
        <ActiveSlot $active $db={3} $hl={6} $hr={2} $ht={5} $hb={5}><TeamsColor badge={<circle cx="30" cy="5" r="9.500" fill="#c8323c" />} /></ActiveSlot>
        <Slot $w={56.5} $pb={4}><Folder /></Slot>
        <Slot $pb={4}><Outlook /></Slot>
        <Slot $dot $pb={4}><BlueTile /></Slot>
        <Slot $dot $pb={4}><Powerpoint /></Slot>
        <Slot $dot $pb={4}><AzureCloud /></Slot>
        <Tray>
          <Slot $w={40} $pb={0}><ChevronUp size={20} strokeWidth={1.8} /></Slot>
          <Slot $w={40} $pb={0}><Cloud /></Slot>
          <MicTile><MicIcon s={.82} /></MicTile>
          <TwoLines $w={57} $lh={21} $fs={14.6}>ENG<br />IN</TwoLines>
          <Slot $w={36} $pb={0}><Wifi size={20} strokeWidth={1.5} /></Slot>
          <Slot $w={25} $pb={0}><Speaker /></Slot>
          <Slot $w={34} $pb={0}><Battery /></Slot>
          <TwoLines $w={91.5} $a="right" $lh={21} $fs={15}>15:58<br />12-11-2024</TwoLines>
          <Slot $w={38} $pb={0}><Bell size={21} strokeWidth={1.2} /></Slot>
        </Tray>
      </OuterBar>
    </Screen>
  );
}
